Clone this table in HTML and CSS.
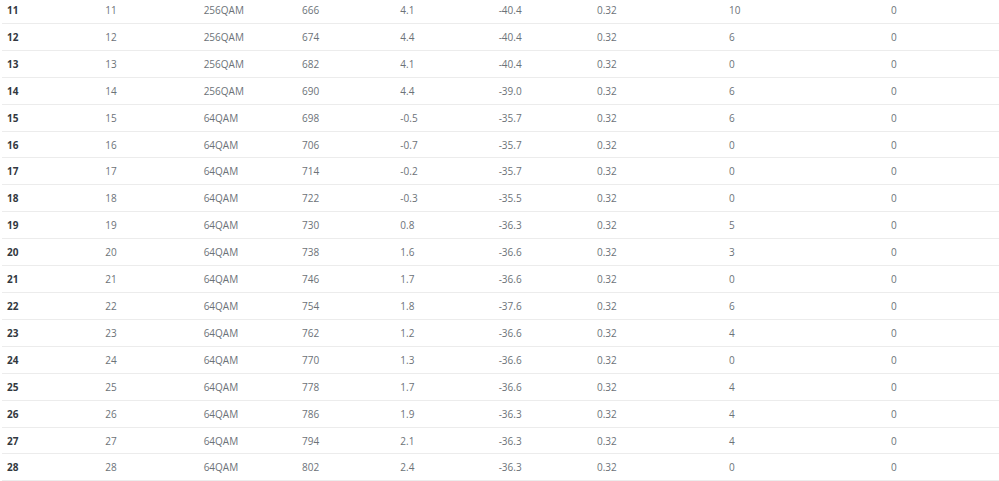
FILE: index.html
```html
<!DOCTYPE html>
<html>
<head>
<meta charset="utf-8">
<link rel="stylesheet" href="styles.css">
</head>
<body>
<div class="wrap">
<table class="tbl">
<colgroup>
<col class="c1"><col class="c1"><col class="c1"><col class="c1"><col class="c1"><col class="c1"><col class="c7"><col class="c8"><col>
</colgroup>
<tbody>
<tr><th>11</th><td>11</td><td>256QAM</td><td>666</td><td>4.1</td><td>-40.4</td><td>0.32</td><td>10</td><td>0</td></tr>
<tr><th>12</th><td>12</td><td>256QAM</td><td>674</td><td>4.4</td><td>-40.4</td><td>0.32</td><td>6</td><td>0</td></tr>
<tr><th>13</th><td>13</td><td>256QAM</td><td>682</td><td>4.1</td><td>-40.4</td><td>0.32</td><td>0</td><td>0</td></tr>
<tr><th>14</th><td>14</td><td>256QAM</td><td>690</td><td>4.4</td><td>-39.0</td><td>0.32</td><td>6</td><td>0</td></tr>
<tr><th>15</th><td>15</td><td>64QAM</td><td>698</td><td>-0.5</td><td>-35.7</td><td>0.32</td><td>6</td><td>0</td></tr>
<tr><th>16</th><td>16</td><td>64QAM</td><td>706</td><td>-0.7</td><td>-35.7</td><td>0.32</td><td>0</td><td>0</td></tr>
<tr><th>17</th><td>17</td><td>64QAM</td><td>714</td><td>-0.2</td><td>-35.7</td><td>0.32</td><td>0</td><td>0</td></tr>
<tr><th>18</th><td>18</td><td>64QAM</td><td>722</td><td>-0.3</td><td>-35.5</td><td>0.32</td><td>0</td><td>0</td></tr>
<tr><th>19</th><td>19</td><td>64QAM</td><td>730</td><td>0.8</td><td>-36.3</td><td>0.32</td><td>5</td><td>0</td></tr>
<tr><th>20</th><td>20</td><td>64QAM</td><td>738</td><td>1.6</td><td>-36.6</td><td>0.32</td><td>3</td><td>0</td></tr>
<tr><th>21</th><td>21</td><td>64QAM</td><td>746</td><td>1.7</td><td>-36.6</td><td>0.32</td><td>0</td><td>0</td></tr>
<tr><th>22</th><td>22</td><td>64QAM</td><td>754</td><td>1.8</td><td>-37.6</td><td>0.32</td><td>6</td><td>0</td></tr>
<tr><th>23</th><td>23</td><td>64QAM</td><td>762</td><td>1.2</td><td>-36.6</td><td>0.32</td><td>4</td><td>0</td></tr>
<tr><th>24</th><td>24</td><td>64QAM</td><td>770</td><td>1.3</td><td>-36.6</td><td>0.32</td><td>0</td><td>0</td></tr>
<tr><th>25</th><td>25</td><td>64QAM</td><td>778</td><td>1.7</td><td>-36.6</td><td>0.32</td><td>4</td><td>0</td></tr>
<tr><th>26</th><td>26</td><td>64QAM</td><td>786</td><td>1.9</td><td>-36.3</td><td>0.32</td><td>4</td><td>0</td></tr>
<tr><th>27</th><td>27</td><td>64QAM</td><td>794</td><td>2.1</td><td>-36.3</td><td>0.32</td><td>4</td><td>0</td></tr>
<tr><th>28</th><td>28</td><td>64QAM</td><td>802</td><td>2.4</td><td>-36.3</td><td>0.32</td><td>0</td><td>0</td></tr>
</tbody>
</table>
</div>
</body>
</html>
```
FILE: styles.css
```css
html, body {
  margin: 0;
  padding: 0;
  background: #ffffff;
  overflow: hidden;
}
.wrap {
  margin-top: -3px;
  padding-left: 2px;
  width: 1010px;
}
.tbl {
  border-collapse: collapse;
  width: 1010px;
  table-layout: fixed;
  font-family: "Open Sans", "Noto Sans", sans-serif;
  font-size: 10px;
}
.c1 { width: 98.33px; }
.c7 { width: 132px; }
.c8 { width: 162px; }
.tbl th,
.tbl td {
  text-align: left;
  padding: 6px 5px 4px 5px;
  line-height: 15.9px;
  border-bottom: 1px solid #ececec;
  color: #6c7278;
  font-weight: 400;
  white-space: nowrap;
}
.tbl th {
  color: #333840;
  font-weight: 700;
}
```
